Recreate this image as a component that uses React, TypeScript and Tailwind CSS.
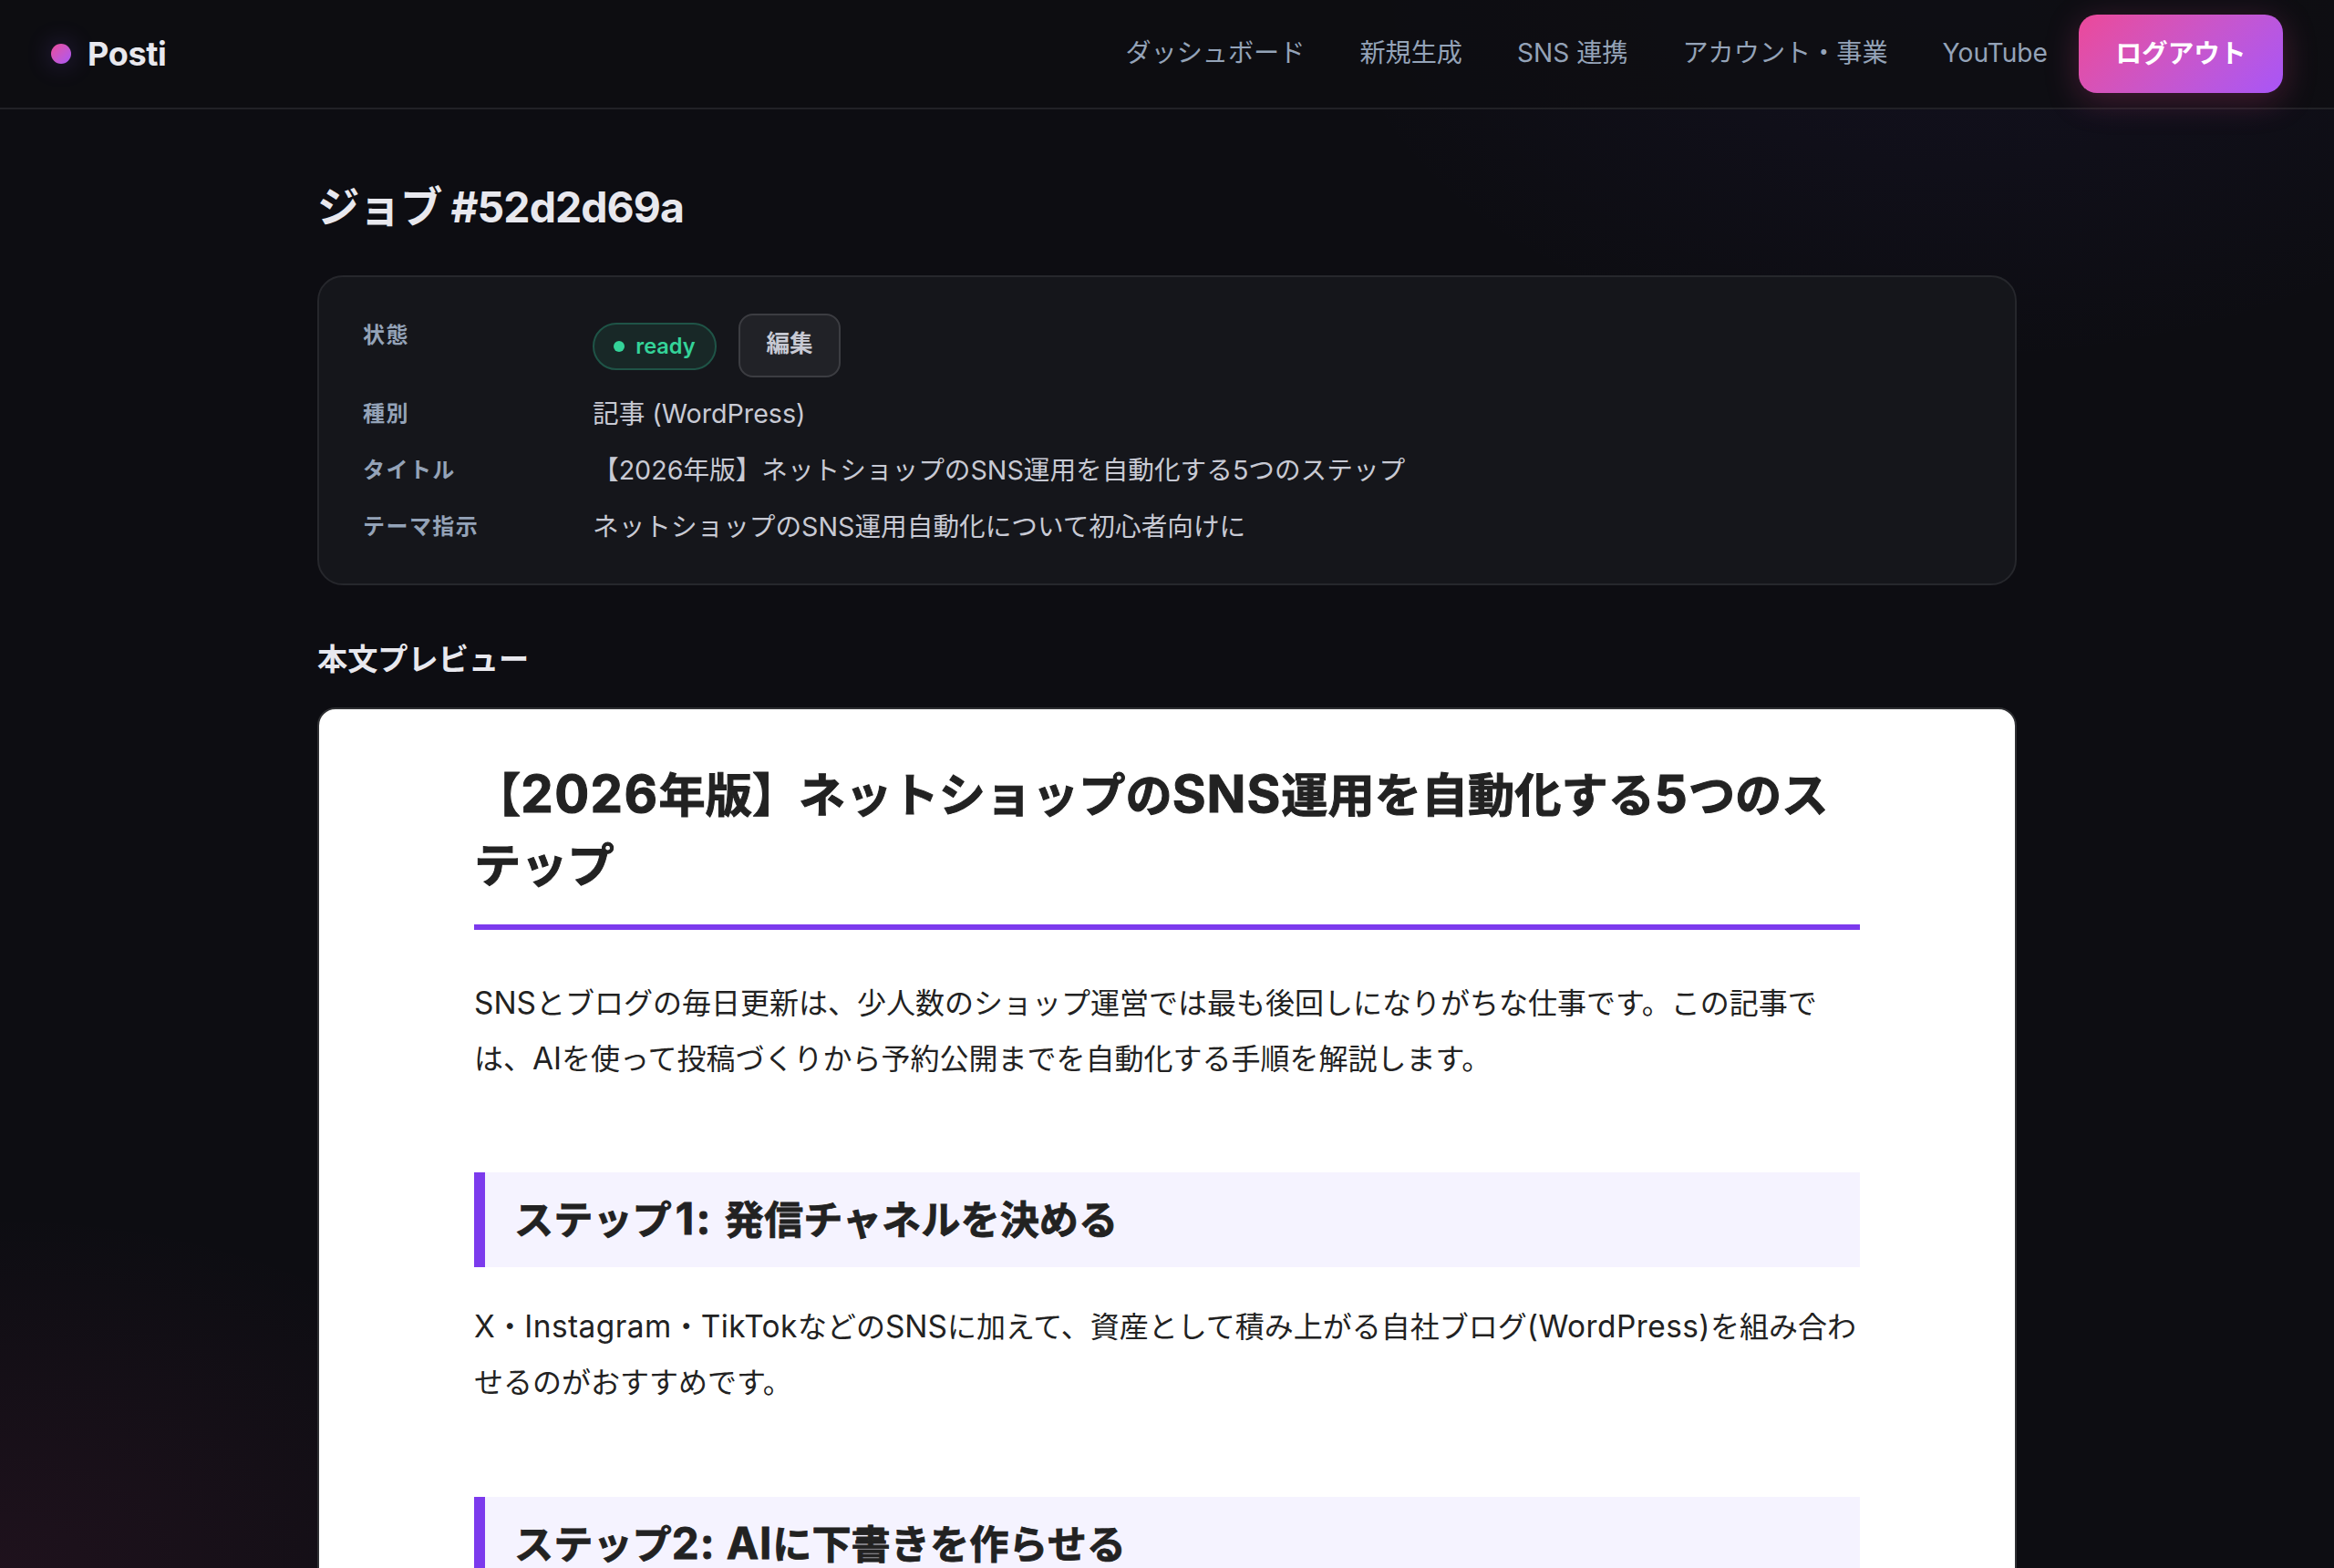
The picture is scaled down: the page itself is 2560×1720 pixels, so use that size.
import type { ReactNode } from "react"

const navItems = ["ダッシュボード", "新規生成", "SNS 連携", "アカウント・事業", "YouTube"]

function Header() {
  return (
    <header className="flex h-[120px] items-center justify-between border-b-2 border-[#212126] bg-[#0e0e12]/80 px-14">
      <a className="flex items-center gap-[18px]">
        <span className="h-[22px] w-[22px] rounded-full bg-linear-135 from-[#ec4899] to-[#a855f7] shadow-[0_0_28px_rgba(139,92,246,0.3)]" />
        <span className="text-[36px] font-bold tracking-[-0.01em] text-[#e8e8ee]">Posti</span>
      </a>
      <nav className="flex items-center gap-3">
        {navItems.map((item) => (
          <a key={item} className="px-6 pb-0.5 text-[28.15px] whitespace-nowrap text-[#94a3b8]">
            {item}
          </a>
        ))}
        <button className="-ml-0.5 h-[86px] w-[224px] rounded-[20px] bg-linear-135 from-[#ec4899] to-[#a855f7] text-[28.6px] font-semibold text-white shadow-[0_8px_36px_rgba(236,72,153,0.25)]">
          ログアウト
        </button>
      </nav>
    </header>
  )
}

function Row({ label, children }: { label: string; children: ReactNode }) {
  return (
    <>
      <dt className="h-[42px] text-[24px] leading-[42px] font-semibold tracking-[0.06em] text-[#94a3b8] first:pt-0.5">
        {label}
      </dt>
      <dd className="text-[28.65px] leading-[42px] text-[#c8cad4]">{children}</dd>
    </>
  )
}

function JobCard() {
  return (
    <dl className="mt-[43px] grid h-[340px] grid-cols-[220px_1fr] content-start gap-x-8 gap-y-5 rounded-[28px] border-2 border-[#26272c] bg-[#15161b] px-12 pt-[41px]">
      <Row label="状態">
        <div className="flex h-[68px] items-center gap-6">
          <span className="mt-0.5 flex h-[52px] w-[136px] items-center justify-center gap-3 rounded-full border-2 border-[#1f5447] bg-[#182827] text-[23.6px] font-semibold text-[#34d399]">
            <span className="h-3 w-3 rounded-full bg-[#34d399]" />
            ready
          </span>
          <button className="h-[70px] w-[112px] rounded-2xl border-2 border-[#3c3d42] bg-[#212227] pb-1 text-[25.6px] font-semibold text-[#c8cad4]">
            編集
          </button>
        </div>
      </Row>
      <Row label="種別">記事 (WordPress)</Row>
      <Row label="タイトル">【2026年版】ネットショップのSNS運用を自動化する5つのステップ</Row>
      <Row label="テーマ指示">ネットショップのSNS運用自動化について初心者向けに</Row>
    </dl>
  )
}

// Latin runs are set a little larger than the kana and kanji around them
function Caps({ children }: { children: ReactNode }) {
  return <span className="text-[1.044em] leading-none">{children}</span>
}

function Word({ children }: { children: ReactNode }) {
  return <span className="text-[1.044em] leading-none tracking-[0.014em]">{children}</span>
}

function Bold({ children }: { children: ReactNode }) {
  return <span className="text-[1.1em] leading-none tracking-[0.018em]">{children}</span>
}

function Step({ title, children }: { title: ReactNode; children?: ReactNode }) {
  return (
    <section className="mt-[94px]">
      <h2 className="h-[104px] border-l-[12px] border-[#7c3aed] bg-[#f5f3ff] pl-8 text-[43.2px] leading-[104px] font-bold whitespace-pre [-webkit-text-stroke:0.8px_#222222]">
        {title}
      </h2>
      <p className="mt-9 h-[122px] text-[32px] leading-[60.6px] whitespace-nowrap">{children}</p>
    </section>
  )
}

function Article() {
  return (
    <article className="mt-[31px] h-[1400px] rounded-[20px] border-2 border-[#2f3033] bg-white px-[170px] pt-[56px] text-[#222222]">
      <h1 className="h-[186px] border-b-[6px] border-[#7c3aed] text-[51.2px] leading-[76.8px] font-bold whitespace-nowrap [-webkit-text-stroke:1px_#222222]">
        【<span className="text-[1.1em] leading-none tracking-[0.026em]">2026</span>年版】ネットショップの
        <Bold>SNS</Bold>運用を自動化する<Bold>5</Bold>つのス
        <br />
        テップ
      </h1>
      <p className="mt-[50px] h-[122px] text-[32px] leading-[61.4px] whitespace-nowrap">
        <Caps>SNS</Caps>とブログの毎日更新は、少人数のショップ運営では最も後回しになりがちな仕事です。この記事で
        <br />
        は、<Caps>AI</Caps>を使って投稿づくりから予約公開までを自動化する手順を解説します。
      </p>
      <Step
        title={
          <>
            ステップ<span className="pl-1 text-[1.1em] leading-none tracking-[0.045em]">1: </span>発信チャネルを決める
          </>
        }
      >
        <Word>X</Word>・<Word>Instagram</Word>・<Word>TikTok</Word>などの<Caps>SNS</Caps>
        に加えて、資産として積み上がる自社ブログ<Word>(WordPress)</Word>を組み合わ
        <br />
        せるのがおすすめです。
      </Step>
      <Step
        title={
          <>
            ステップ<span className="text-[1.1em] leading-none tracking-[0.02em]">2: </span>
            <Bold>AI</Bold>に下書きを作らせる
          </>
        }
      />
    </article>
  )
}

export default function App() {
  return (
    <div
      lang="ja"
      className="h-[1720px] w-[2560px] overflow-hidden bg-[#0d0d12] bg-[radial-gradient(620px_390px_at_0%_100%,rgba(236,72,153,0.08),transparent),radial-gradient(700px_420px_at_84%_-1%,rgba(110,80,246,0.06),transparent)] font-['Inter','Noto_Sans_CJK_JP',sans-serif]"
    >
      <Header />
      <main className="mx-auto w-[1864px] pt-[75px]">
        <h1 className="text-[46.4px] leading-[64px] font-bold tracking-[-0.02em] text-[#e8e8ee]">ジョブ #52d2d69a</h1>
        <JobCard />
        <h2 className="mt-[59px] text-[33.2px] leading-[44px] font-semibold text-[#e8e8ee]">本文プレビュー</h2>
        <Article />
      </main>
    </div>
  )
}
